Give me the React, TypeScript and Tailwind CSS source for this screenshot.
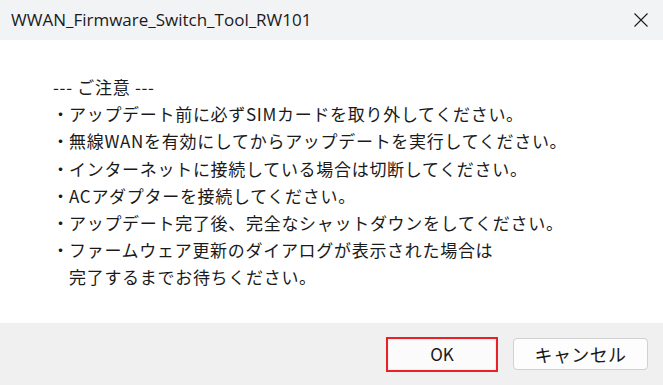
const lines = [
  'アップデート前に必ずSIMカードを取り外してください。',
  '無線WANを有効にしてからアップデートを実行してください。',
  'インターネットに接続している場合は切断してください。',
  'ACアダプターを接続してください。',
  'アップデート完了後、完全なシャットダウンをしてください。',
  'ファームウェア更新のダイアログが表示された場合は',
];

const jp = { fontFamily: '"Noto Sans CJK JP", "Noto Sans", sans-serif' };

export default function App() {
  return (
    <div className="w-[663px] h-[385px] flex flex-col bg-white overflow-hidden">
      <div className="h-[40px] shrink-0 bg-[#f2f3f5] flex items-center justify-between pl-[11px] pr-[15px]">
        <span className="text-[17px] text-[#1a1a1a]" style={{ fontFamily: '"Open Sans", "Noto Sans", sans-serif' }}>
          WWAN_Firmware_Switch_Tool_RW101
        </span>
        <svg width="14" height="14" viewBox="0 0 14 14" className="text-[#1a1a1a]">
          <path d="M0.5 0.5L13.5 13.5M13.5 0.5L0.5 13.5" stroke="currentColor" strokeWidth="1.1" />
        </svg>
      </div>

      <div className="flex-1 pt-[33px] pl-[52px] text-[17px] leading-[27.2px] tracking-[0.7px] text-[#1a1a1a]" style={jp}>
        <p className="pl-[1px]">--- ご注意 ---</p>
        {lines.map(line => (
          <p key={line} className="flex">
            <span className="w-[17px] shrink-0 text-center">・</span>
            <span>{line}</span>
          </p>
        ))}
        <p className="pl-[17px]">完了するまでお待ちください。</p>
      </div>

      <div className="h-[62px] shrink-0 bg-[#f0f0f0] flex items-center justify-end gap-[15px] pr-[15px]" style={jp}>
        <div className="w-[112px] h-[35px] border-[2px] border-[#e8202a] p-[1px]">
          <button className="w-full h-full rounded-[3px] bg-[#fbfbfb] text-[17px] text-[#1a1a1a]">OK</button>
        </div>
        <button className="w-[135px] h-[32px] rounded-[4px] border border-[#d1d1d1] bg-[#fdfdfd] text-[18px] tracking-[0.4px] text-[#1a1a1a]">
          キャンセル
        </button>
      </div>
    </div>
  );
}
